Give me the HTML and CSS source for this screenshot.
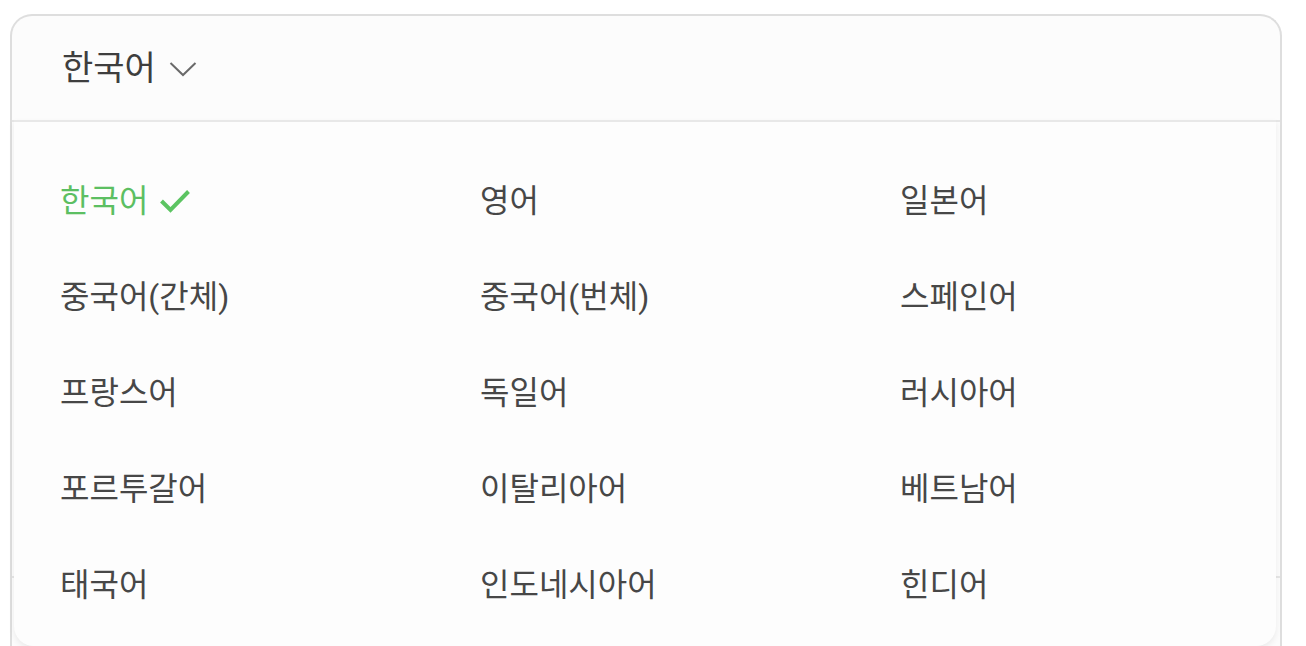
FILE: index.html
```html
<!DOCTYPE html>
<html lang="ko">
<head>
<meta charset="utf-8">
<title>언어 선택</title>
<link rel="stylesheet" href="styles.css">
</head>
<body>
<div class="card">
  <div class="card-header">
    <span class="current">한국어</span>
    <svg class="chevron" width="28" height="16" viewBox="0 0 28 16" aria-hidden="true">
      <path d="M1.5 2 L14 14 L26.5 2" fill="none" stroke="#6a6a6a" stroke-width="2"/>
    </svg>
  </div>
  <div class="card-body"></div>
  <div class="card-footer"></div>

  <div class="menu">
    <ul class="lang-grid">
      <li class="lang selected">한국어
        <svg class="check" width="32" height="26" viewBox="0 0 32 26" aria-hidden="true">
          <path d="M2.5 13 L11.5 22 L29.5 3.5" fill="none" stroke="#5cc462" stroke-width="4"/>
        </svg>
      </li>
      <li class="lang">영어</li>
      <li class="lang">일본어</li>
      <li class="lang">중국어(간체)</li>
      <li class="lang">중국어(번체)</li>
      <li class="lang">스페인어</li>
      <li class="lang">프랑스어</li>
      <li class="lang">독일어</li>
      <li class="lang">러시아어</li>
      <li class="lang">포르투갈어</li>
      <li class="lang">이탈리아어</li>
      <li class="lang">베트남어</li>
      <li class="lang">태국어</li>
      <li class="lang">인도네시아어</li>
      <li class="lang">힌디어</li>
    </ul>
  </div>
</div>
</body>
</html>
```

FILE: styles.css
```css
html, body {
  margin: 0;
  padding: 0;
  background: #ffffff;
  overflow: hidden;
}

body {
  font-family: Roboto, "Noto Sans CJK KR", "Noto Sans", sans-serif;
  font-weight: 400;
  color: #444444;
  height: 646px;
}

.card {
  position: relative;
  box-sizing: border-box;
  margin: 14px 0 0 10px;
  width: 1272px;
  height: 632px;
  border: 2px solid #dedede;
  border-bottom: 0;
  border-radius: 22px 22px 0 0;
  background: #fcfcfc;
}

.card-header {
  box-sizing: border-box;
  height: 104px;
  display: flex;
  align-items: center;
  padding-left: 50px;
  gap: 13px;
}

.current {
  font-size: 34px;
  line-height: 1;
  color: #3e3e3e;
}

.chevron {
  display: block;
  margin-top: 2px;
}

.card-body {
  height: 454px;
  border-top: 2px solid #e6e6e6;
}

.card-footer {
  border-top: 2px solid #e6e6e6;
}

.menu {
  position: absolute;
  top: 104px;
  left: 2px;
  right: 4px;
  height: 526px;
  box-sizing: border-box;
  background: #fdfdfd;
  border-top: 2px solid #e8e8e8;
  border-radius: 0 0 20px 20px;
  box-shadow: 0 3px 6px rgba(0, 0, 0, 0.07);
}

.lang-grid {
  list-style: none;
  margin: 0;
  padding: 31px 0 0 46px;
  display: grid;
  grid-template-columns: repeat(3, 420px);
  grid-auto-rows: 96px;
}

.lang {
  display: flex;
  align-items: center;
  gap: 11px;
  font-size: 32px;
  line-height: 1;
  color: #474747;
}

.lang.selected {
  color: #5cbf62;
}

.check {
  display: block;
}
```
